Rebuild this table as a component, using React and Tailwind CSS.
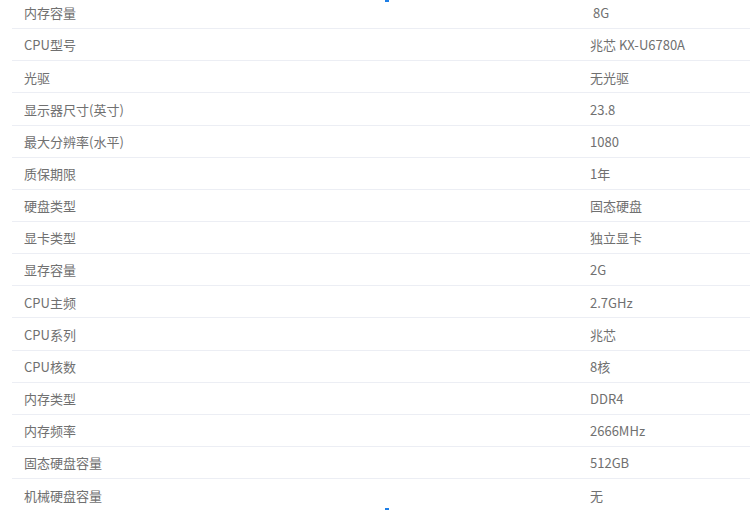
import React from 'react';

const specs = [
  ['内存容量', ' 8G'],
  ['CPU型号', '兆芯 KX-U6780A'],
  ['光驱', '无光驱'],
  ['显示器尺寸(英寸)', '23.8'],
  ['最大分辨率(水平)', '1080'],
  ['质保期限', '1年'],
  ['硬盘类型', '固态硬盘'],
  ['显卡类型', '独立显卡'],
  ['显存容量', '2G'],
  ['CPU主频', '2.7GHz'],
  ['CPU系列', '兆芯'],
  ['CPU核数', '8核'],
  ['内存类型', 'DDR4'],
  ['内存频率', '2666MHz'],
  ['固态硬盘容量', '512GB'],
  ['机械硬盘容量', '无'],
];

export default function App() {
  return (
    <div className="relative w-[750px] h-[510px] overflow-hidden bg-white text-[13px] text-[#707070] font-['Noto_Sans_CJK_SC','Microsoft_YaHei',sans-serif]">
      {/* bits of the blue tab markers cut off at the edges */}
      <span className="absolute left-[385px] top-0 w-[4px] h-[2px] bg-[#1e7fe6]" />
      <span className="absolute left-[385px] bottom-0 w-[4px] h-[2px] bg-[#1e7fe6]" />

      <div className="ml-[12px] mt-[-3px]">
        {specs.map(([name, value], i) => (
          <div
            key={name}
            className={`flex items-center h-[32.15px] pt-[1px] ${i < specs.length - 1 ? 'border-b border-[#eceef4]' : ''}`}
          >
            <div className="w-[566px] pl-[12px] whitespace-pre">{name}</div>
            <div className="flex-1 pl-[12px] whitespace-pre">{value}</div>
          </div>
        ))}
      </div>
    </div>
  );
}
